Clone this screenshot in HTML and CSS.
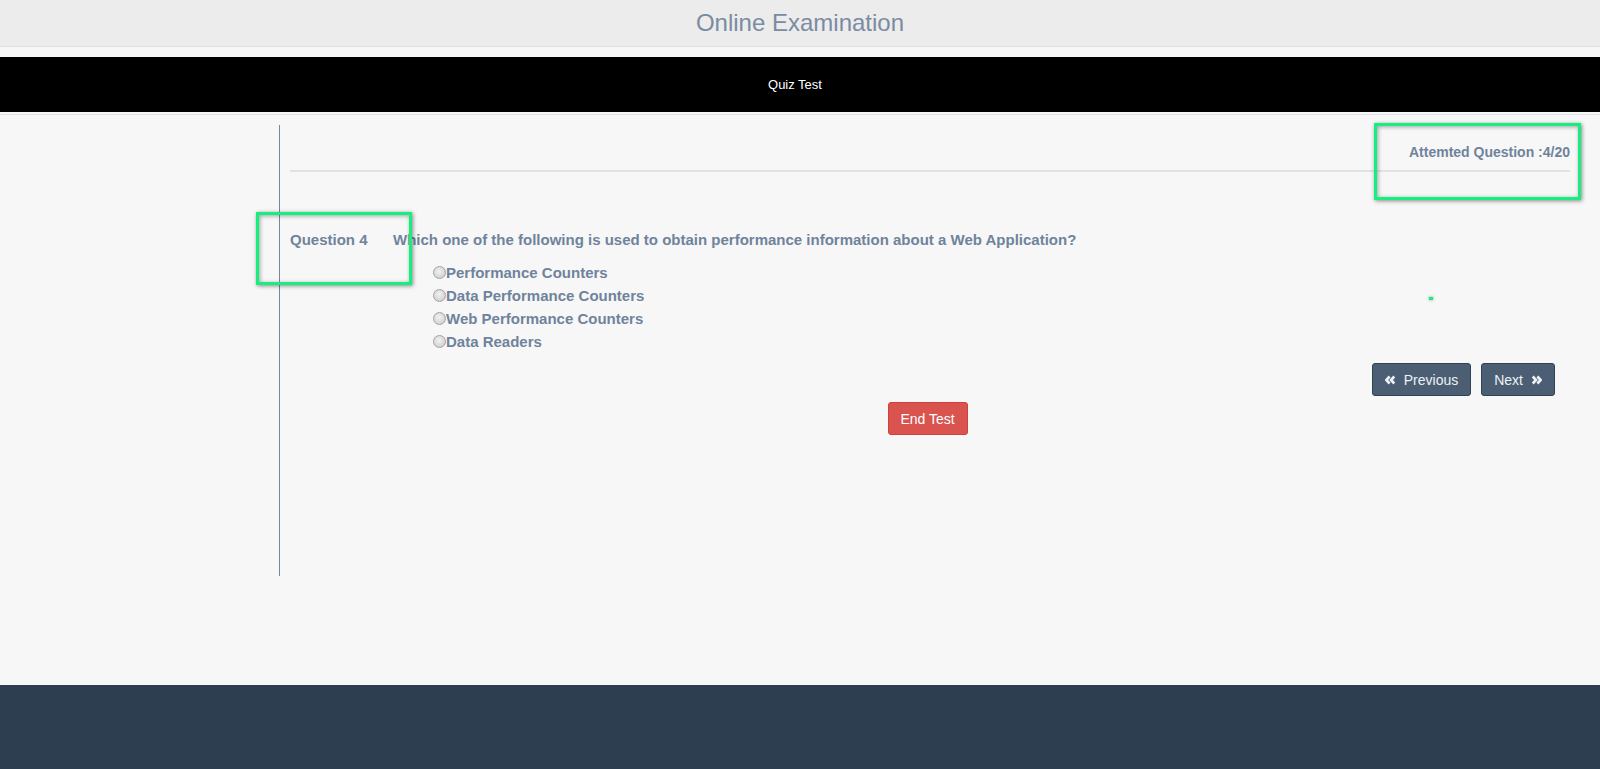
FILE: index.html
```html
<!DOCTYPE html>
<html lang="en">
<head>
<meta charset="utf-8">
<title>Online Examination</title>
<link rel="stylesheet" href="styles.css">
</head>
<body>
<header class="site-header">Online Examination</header>
<nav class="quiz-bar">Quiz Test</nav>
<div class="bar-rule"></div>
<main class="exam">
  <section class="exam-col">
    <div class="attempt">Attemted Question :4/20</div>
    <hr class="attempt-rule">
    <div class="question">
      <span class="q-label">Question 4</span>
      <span class="q-text">Which one of the following is used to obtain performance information about a Web Application?</span>
    </div>
    <div class="options">
      <label class="option"><input type="radio" name="q4">Performance Counters</label>
      <label class="option"><input type="radio" name="q4">Data Performance Counters</label>
      <label class="option"><input type="radio" name="q4">Web Performance Counters</label>
      <label class="option"><input type="radio" name="q4">Data Readers</label>
    </div>
    <div class="nav-buttons">
      <button class="btn btn-nav" type="button">
        <svg class="chev" width="10" height="10" viewBox="0 0 10 10"><polyline points="4.6,1.5 1.3,5 4.6,8.5" fill="none" stroke="currentColor" stroke-width="2.6"/><polyline points="9.3,1.5 6,5 9.3,8.5" fill="none" stroke="currentColor" stroke-width="2.6"/></svg>
        Previous
      </button>
      <button class="btn btn-nav" type="button">
        Next
        <svg class="chev" width="10" height="10" viewBox="0 0 10 10"><polyline points="0.7,1.5 4,5 0.7,8.5" fill="none" stroke="currentColor" stroke-width="2.6"/><polyline points="5.4,1.5 8.7,5 5.4,8.5" fill="none" stroke="currentColor" stroke-width="2.6"/></svg>
      </button>
    </div>
    <div class="end-row">
      <button class="btn btn-end" type="button">End Test</button>
    </div>
  </section>
  <div class="mark mark-attempt"></div>
  <div class="mark mark-question"></div>
  <div class="mark-dot"></div>
</main>
<footer class="site-footer"></footer>
</body>
</html>
```

FILE: styles.css
```css
* { box-sizing: border-box; }

html, body {
  margin: 0;
  padding: 0;
}

body {
  background: #f7f7f7;
  font-family: "Liberation Sans", Arial, sans-serif;
  color: #6f839c;
}

.site-header {
  height: 47px;
  background: #ececec;
  border-bottom: 1px solid #dbe1e8;
  text-align: center;
  font-size: 24px;
  line-height: 46px;
  color: #7a8ba3;
}

.quiz-bar {
  margin-top: 10px;
  height: 55px;
  background: #000;
  color: #fff;
  font-size: 13px;
  line-height: 56px;
  text-align: center;
  padding-right: 10px;
}

.bar-rule {
  margin-top: 2px;
  border-top: 1px solid #dde3ea;
}

.exam {
  position: relative;
  height: 570px;
  padding-top: 10px;
}

.exam-col {
  margin-left: 279px;
  margin-right: 30px;
  height: 451px;
  border-left: 1px solid #778899;
  padding: 17px 0 0 10px;
}

.attempt {
  text-align: right;
  font-weight: bold;
  font-size: 14px;
  line-height: 20px;
}

.attempt-rule {
  margin: 8px 0 0;
  border: 0;
  border-top: 2px solid #e2e2e2;
  height: 0;
}

.question {
  margin-top: 57px;
  display: flex;
  font-weight: bold;
  font-size: 15px;
  line-height: 21px;
}

.q-label {
  width: 103px;
  flex: none;
}

.options {
  margin-top: 11px;
  padding-left: 143px;
}

.option {
  display: block;
  font-weight: bold;
  font-size: 15px;
  line-height: 23px;
}

.option input {
  -webkit-appearance: none;
  appearance: none;
  width: 13px;
  height: 13px;
  margin: 0;
  border: 1px solid #a3a3a3;
  border-radius: 50%;
  background: radial-gradient(circle at 45% 40%, #f2f2f2 0%, #dadada 55%, #c8c8c8 100%);
  vertical-align: -1px;
}

.nav-buttons {
  margin-top: 10px;
  display: flex;
  justify-content: flex-end;
  gap: 10px;
  padding-right: 15px;
}

.btn {
  font-family: "Liberation Sans", Arial, sans-serif;
  font-size: 14px;
  line-height: 20px;
  height: 33px;
  padding: 6px 12px;
  border-radius: 3px;
  cursor: pointer;
  display: inline-flex;
  align-items: center;
  gap: 9px;
}

.btn-nav {
  background: #4b5e73;
  border: 1px solid #2f4256;
  color: #eef2f6;
}

.chev { display: block; }

.end-row {
  margin-top: 6px;
  display: flex;
  justify-content: center;
  padding-right: 5px;
}

.btn-end {
  background: #d9534f;
  border: 1px solid #d43f3a;
  color: #fff;
  width: 80px;
  justify-content: center;
  padding: 6px 0;
}

.site-footer {
  height: 84px;
  background: #2c3e50;
}

.mark {
  position: absolute;
  border: 3px solid #14ef80;
  box-shadow: 1px 1px 4px rgba(0,0,0,0.45), inset 1px 1px 4px rgba(0,0,0,0.35);
}

.mark-attempt {
  left: 1374px;
  top: 8px;
  width: 207px;
  height: 77px;
}

.mark-question {
  left: 256px;
  top: 97px;
  width: 156px;
  height: 73px;
}

.mark-dot {
  position: absolute;
  left: 1429px;
  top: 182px;
  width: 4px;
  height: 3px;
  background: #14ef80;
  box-shadow: 0 0 3px rgba(0,0,0,0.4);
}
```
